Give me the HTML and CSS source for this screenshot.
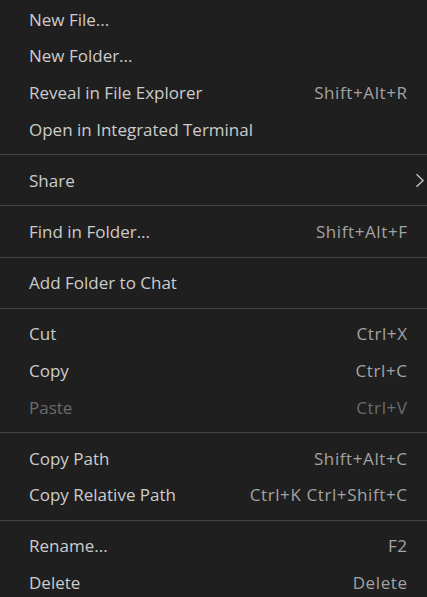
FILE: index.html
```html
<!DOCTYPE html>
<html lang="en">
<head>
  <meta charset="UTF-8" />
  <title>Explorer context menu</title>
  <link rel="stylesheet" href="styles.css">
</head>
<body>
  <div class="menu">
    <div class="item"><span class="label">New File...</span></div>
    <div class="item"><span class="label">New Folder...</span></div>
    <div class="item"><span class="label">Reveal in File Explorer</span><span class="keys">Shift+Alt+R</span></div>
    <div class="item"><span class="label">Open in Integrated Terminal</span></div>
    <div class="sep"></div>
    <div class="item"><span class="label">Share</span>
      <svg class="chevron" width="10" height="15" viewBox="0 0 10 15"><path d="M1.5 1.2 L8 7.5 L1.5 13.8" fill="none" stroke="#bdbdbd" stroke-width="1.5"/></svg>
    </div>
    <div class="sep"></div>
    <div class="item"><span class="label">Find in Folder...</span><span class="keys">Shift+Alt+F</span></div>
    <div class="sep"></div>
    <div class="item"><span class="label">Add Folder to Chat</span></div>
    <div class="sep"></div>
    <div class="item"><span class="label">Cut</span><span class="keys">Ctrl+X</span></div>
    <div class="item"><span class="label">Copy</span><span class="keys">Ctrl+C</span></div>
    <div class="item disabled"><span class="label">Paste</span><span class="keys">Ctrl+V</span></div>
    <div class="sep"></div>
    <div class="item"><span class="label">Copy Path</span><span class="keys">Shift+Alt+C</span></div>
    <div class="item"><span class="label">Copy Relative Path</span><span class="keys">Ctrl+K Ctrl+Shift+C</span></div>
    <div class="sep"></div>
    <div class="item"><span class="label">Rename...</span><span class="keys">F2</span></div>
    <div class="item"><span class="label">Delete</span><span class="keys">Delete</span></div>
  </div>
</body>
</html>
```

FILE: styles.css
```css
html, body { margin: 0; padding: 0; background: #1f1f1f; }
body { font-family: "Open Sans", "Noto Sans", sans-serif; font-size: 17px; color: #cccccc; }

.menu { padding-top: 1px; width: 427px; }

.item {
  display: flex;
  align-items: center;
  height: 36.6px;
  padding: 0 19.4px 0 29px;
  position: relative;
}
.item .label { flex: 1; white-space: nowrap; }
.item .keys { color: #a3a3a3; white-space: nowrap; letter-spacing: 0.6px; }
.item.disabled .label,
.item.disabled .keys { color: #6b6b6b; }

.chevron { position: absolute; right: 2px; top: 11px; }

.sep {
  height: 1px;
  background: #454545;
  margin: 6.8px 0;
}
```
